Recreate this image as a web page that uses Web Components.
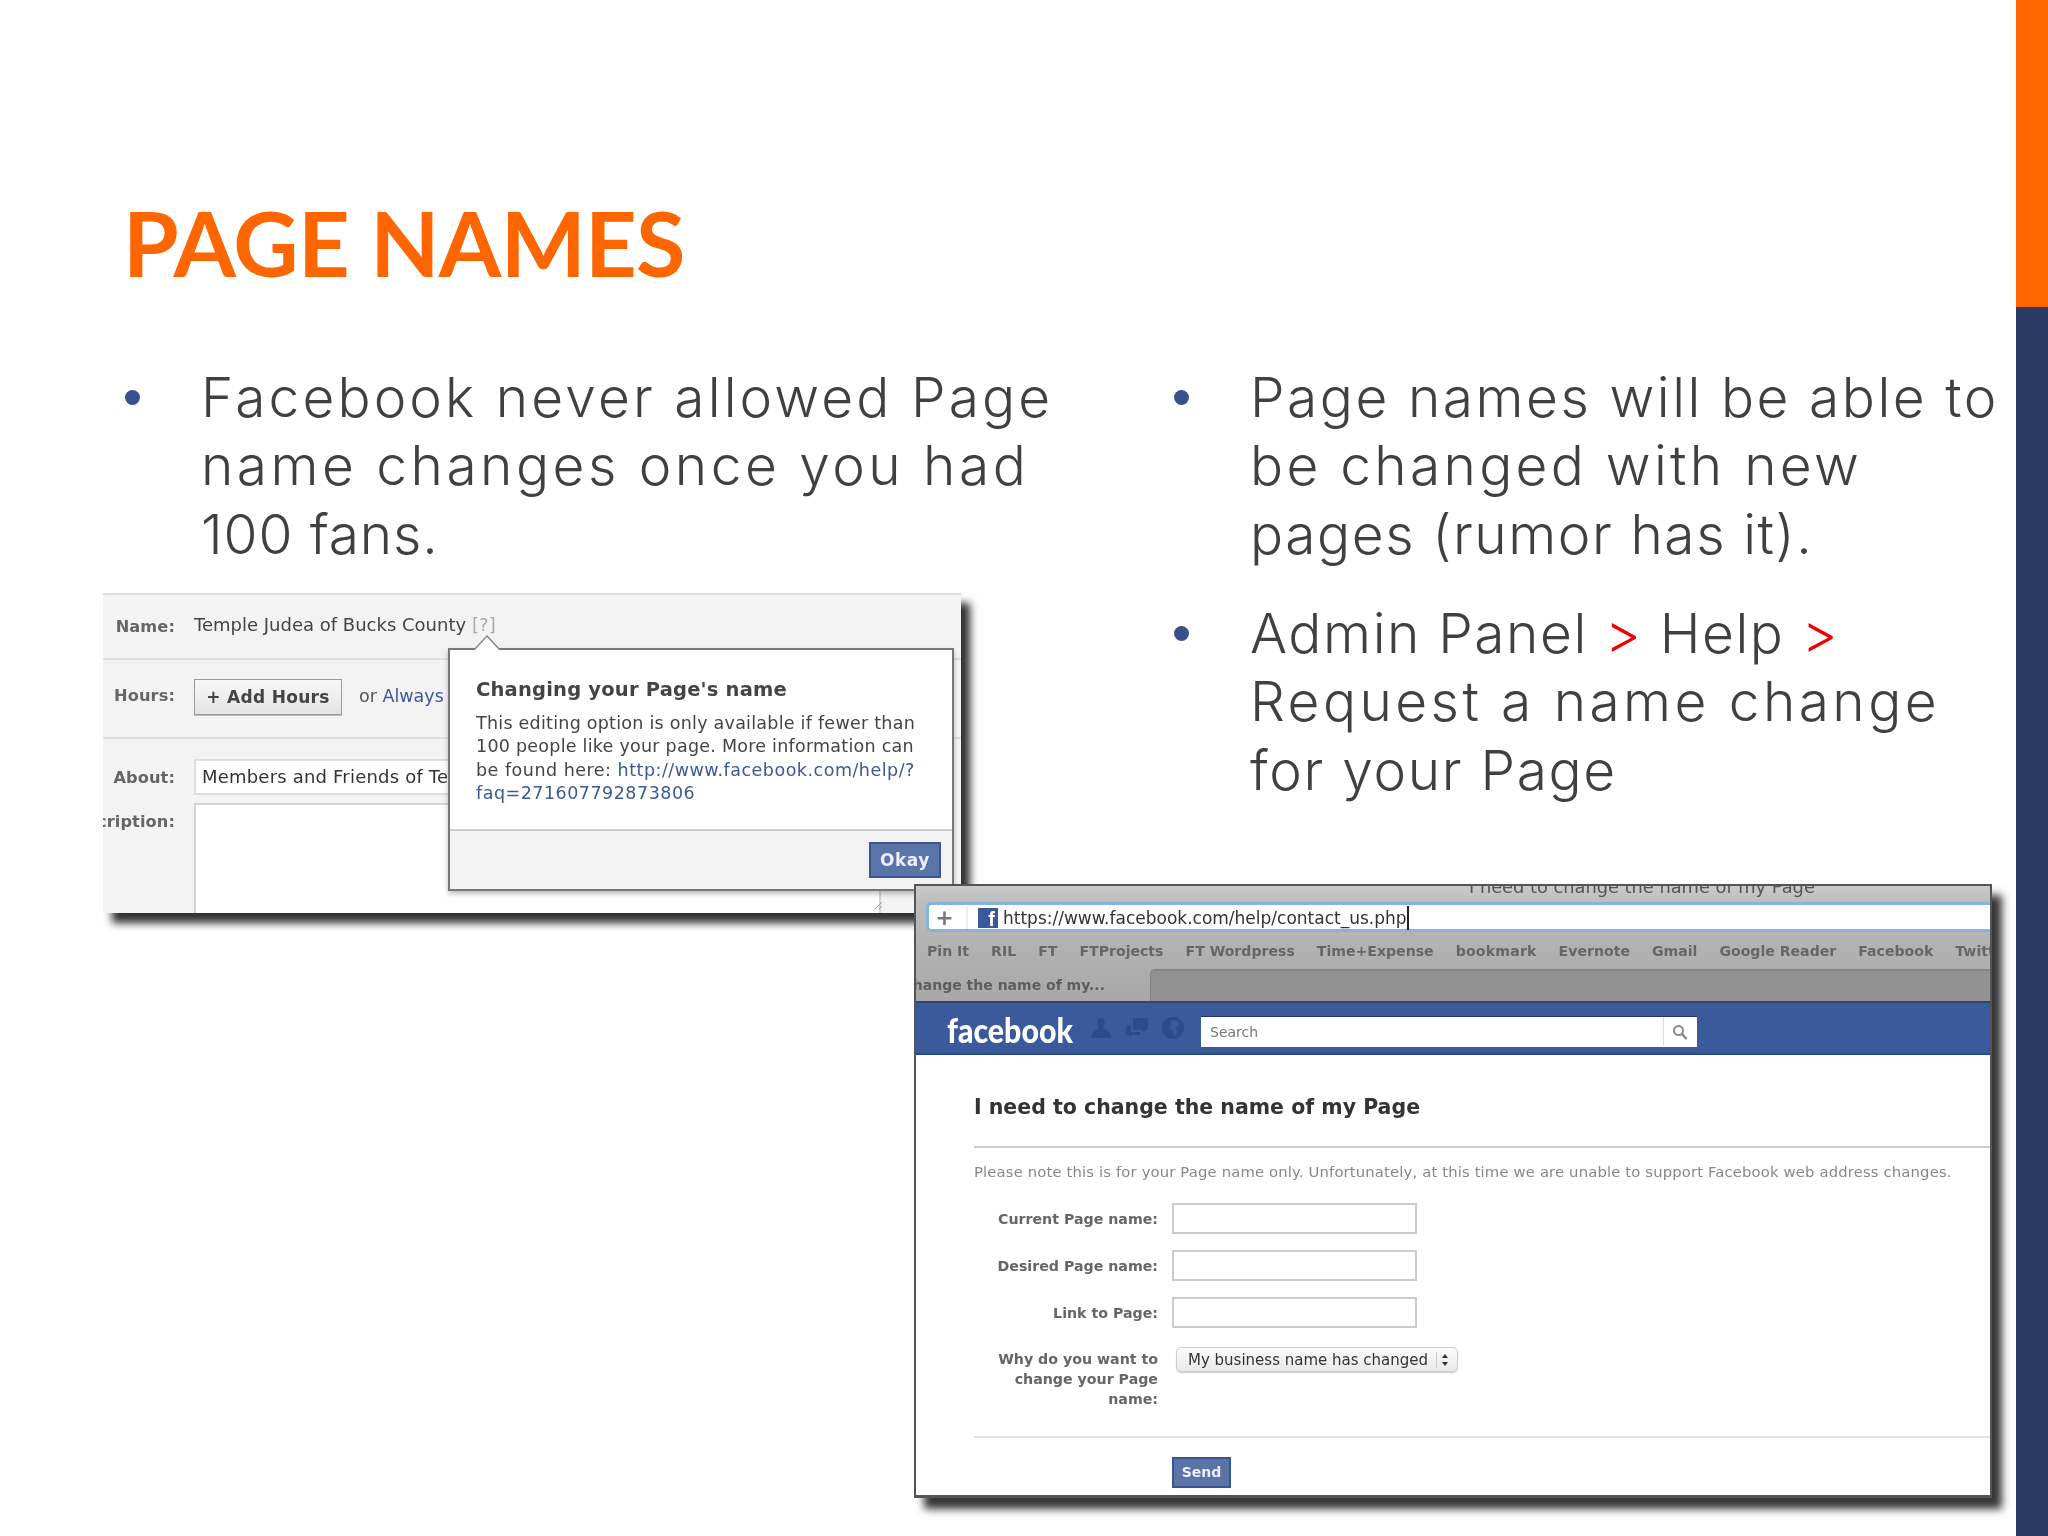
<!DOCTYPE html>
<html><head><meta charset="utf-8"><title>Page names</title>
<style>html,body{margin:0;background:#fff}
bullet-item b{font-weight:300;color:#f00000}</style></head>
<body>
<slide-page>
  <slide-title slot="title">PAGE NAMES</slide-title>
  <bullet-item slot="left"><span style="letter-spacing:3.12px">Facebook never allowed Page</span><br><span style="letter-spacing:3.48px">name changes once you had</span><br><span style="letter-spacing:.9px">100 fans.</span></bullet-item>
  <bullet-item slot="right"><span style="letter-spacing:2.54px">Page names will be able to</span><br><span style="letter-spacing:3.28px">be changed with new</span><br><span style="letter-spacing:1.58px">pages (rumor has it).</span></bullet-item>
  <bullet-item slot="right" class="next"><span style="letter-spacing:1.6px">Admin Panel <b>&gt;</b> Help <b>&gt;</b></span><br><span style="letter-spacing:3.43px">Request a name change</span><br><span style="letter-spacing:1.69px">for your Page</span></bullet-item>
  <edit-shot slot="shots"></edit-shot>
  <help-shot slot="shots"></help-shot>
</slide-page>
<script>
function def(name, html){customElements.define(name,class extends HTMLElement{constructor(){super();this.attachShadow({mode:'open'}).innerHTML=html;}});}
const UI="'DejaVu Sans',sans-serif";
def('slide-page',`<style>
:host{display:grid;grid-template-columns:2016px 32px;width:2048px;height:1536px;position:relative;overflow:hidden;background:#fff;font-family:Inter,sans-serif}
.main{padding:0 0 0 125px;display:flex;flex-direction:column}
.cols{display:grid;grid-template-columns:1049px 1fr;margin-top:71px}
.side{display:flex;flex-direction:column}.o{height:307px;background:#ff6600}.n{flex:1;background:#2a3a63}
</style><div class="main"><slot name="title"></slot><div class="cols"><div><slot name="left"></slot></div><div><slot name="right"></slot></div></div></div>
<div class="side"><div class="o"></div><div class="n"></div></div><slot name="shots"></slot>`);
def('slide-title',`<style>:host{display:block;padding:192px 0 0;margin-left:-2px;font:700 90px/100px Lato,sans-serif;letter-spacing:-.7px;color:#ff6600;white-space:nowrap}</style><span><slot></slot></span>`);
def('bullet-item',`<style>:host{display:grid;grid-template-columns:76px 1fr;font:300 55px/68.4px Inter,sans-serif;color:#404040;white-space:nowrap}
:host(.next){margin-top:30.6px}
i{display:block;width:15px;height:15px;border-radius:50%;background:#3a4f8e;margin:27px 0 0 0}</style><i></i><div><slot></slot></div>`);
def('edit-shot',`<style>
:host{position:absolute;left:103px;top:593px;width:858px;height:320px;box-shadow:9px 10px 8px rgba(20,20,20,.88);font-family:${UI};display:block}
.w{width:100%;height:100%;background:#f3f3f3;overflow:hidden;position:relative;filter:blur(.6px);border-top:2px solid #dcdcdc;box-sizing:border-box}
.r{display:grid;grid-template-columns:72px 1fr;column-gap:19px;border-bottom:2px solid #dedede;box-sizing:border-box;align-items:center}
.l{display:flex;justify-content:flex-end;font-weight:700;font-size:16.2px;letter-spacing:.1px;color:#666;white-space:nowrap}
.r1{height:65px}.r2{height:79px}
.v{font-size:18px;color:#444;white-space:nowrap;margin-top:-4px}.q{color:#aaa;margin-left:6px}
.btn{display:inline-block;box-sizing:border-box;width:148px;height:36px;line-height:34px;text-align:center;border:1px solid #999;background:linear-gradient(#f8f8f8,#e4e4e4);font-weight:700;font-size:17px;letter-spacing:.3px;color:#444;box-shadow:0 1px 0 #bbb;white-space:nowrap;margin-top:-3px}
.h{display:flex;align-items:center;gap:17px}.or{font-size:17.5px;color:#555;margin-top:-5px;white-space:nowrap}.or a{color:#3b5998}
.r3{border:0;padding-top:20px;align-items:start}.r4{border:0;padding-top:8px;align-items:start}
.in{box-sizing:border-box;width:687px;height:36px;line-height:32px;border:2px solid #ddd;background:#fff;font-size:18px;letter-spacing:.2px;color:#333;padding-left:6px;white-space:nowrap;overflow:hidden}
.ta{box-sizing:border-box;width:687px;height:200px;border:2px solid #d4d4d4;background:#fff}
.mt{margin-top:9px}.up{margin-top:-6px}
.grip{position:absolute;left:770px;top:304px}
</style><div class="w">
<div class="r r1"><div class="l"><span>Name:</span></div><div class="v"><span>Temple Judea of Bucks County</span><span class="q">[?]</span></div></div>
<div class="r r2"><div class="l up"><span>Hours:</span></div><div class="h"><span class="btn"><span>+ Add Hours</span></span><span class="or"><span>or <a>Always</a></span></span></div></div>
<div class="r r3"><div class="l mt"><span>About:</span></div><div class="in"><span>Members and Friends of Temple</span></div></div>
<div class="r r4"><div class="l mt"><span>Description:</span></div><div class="ta"></div></div>
<svg class="grip" width="10" height="10" viewBox="0 0 10 10"><path d="M2 10 9 3M6 10 9 7" stroke="#999" stroke-width="1"/></svg>
<fb-popup></fb-popup></div>`);
def('fb-popup',`<style>
:host{position:absolute;left:345px;top:53px;width:506px;height:243px;box-sizing:border-box;border:2px solid #777;background:#fff;display:flex;flex-direction:column;box-shadow:0 3px 5px rgba(0,0,0,.25)}
svg{position:absolute;left:24px;top:-15px}
.b{height:181px;box-sizing:border-box;padding:27px 0 0 26px;border-bottom:2px solid #ccc;white-space:nowrap}
h3{margin:0 0 9px;font-size:19.5px;letter-spacing:.2px;line-height:26px;color:#444}
p{margin:0;font-size:17.5px;line-height:23.4px;color:#444;letter-spacing:.25px}a{color:#3b5998}
.l3{letter-spacing:.5px}
.f{flex:1;background:#f3f3f3;display:flex;justify-content:flex-end;align-items:center;padding-right:11px}
.ok{box-sizing:border-box;width:72px;height:36px;line-height:33px;text-align:center;background:#5b74a8;border:2px solid #3a5590;color:#eef;font-weight:700;font-size:17px;letter-spacing:.5px}
</style><svg width="26" height="16" viewBox="0 0 26 16"><path d="M0 15 13 1 26 15" fill="#fff" stroke="#888" stroke-width="1.5"/></svg>
<div class="b"><h3><span>Changing your Page's name</span></h3><p><span>This editing option is only available if fewer than</span><br><span>100 people like your page. More information can</span><br><span class="l3">be found here: <a>http://www.facebook.com/help/?</a></span><br><a class="l3">faq=271607792873806</a></p></div>
<div class="f"><span class="ok"><span>Okay</span></span></div>`);
def('help-shot',`<style>
:host{position:absolute;left:914px;top:884px;width:1078px;height:614px;box-sizing:border-box;border:2px solid #555;border-bottom-width:3px;background:#fff;box-shadow:10px 11px 8px rgba(20,20,20,.85);display:block;font-family:${UI}}
.w{height:100%;overflow:hidden;display:flex;flex-direction:column;filter:blur(.6px)}
</style><div class="w"><browser-chrome></browser-chrome><fb-bar></fb-bar><help-form></help-form></div>`);
def('browser-chrome',`<style>
:host{display:block;height:115px;background:linear-gradient(#cacaca 0,#bcbcbc 18px,#b2b2b2 60px,#a8a8a8 100%);overflow:hidden;white-space:nowrap}
.t{height:16px;overflow:hidden;position:relative}.t span{position:absolute;left:553px;top:-10px;font-size:17.8px;color:#555}
.u{margin-left:10px;height:30px;background:#fff;box-sizing:border-box;border:3px solid #86b4db;border-right:0;border-radius:5px 0 0 5px;display:flex;align-items:center;font-size:17px;color:#333;padding-top:1px}
.p{width:39px;text-align:center;color:#777;font-size:22px;font-weight:700;line-height:22px;border-right:2px solid #eee;margin-right:10px;padding-right:6px;box-sizing:border-box;height:22px}
.fav{width:20px;height:20px;background:#3b5998;color:#fff;font:700 20px/22px 'Liberation Sans';text-align:right;padding-right:3px;box-sizing:border-box;margin-right:5px;overflow:hidden}
.c{display:inline-block;width:2px;height:24px;background:#222}
.b{height:37px;display:flex;align-items:center;gap:22px;padding-left:11px;font-weight:700;font-size:14.1px;color:#666;overflow:hidden}
.tabs{display:flex;height:32px}.a{width:234px;display:flex;justify-content:flex-end;padding-right:45px;box-sizing:border-box;overflow:hidden;line-height:32px;font-weight:700;font-size:14px;color:#5d5d5d}
.d{flex:1;background:#929292;border-radius:5px 0 0 0;border-left:1px solid #808080;border-top:2px solid #858585}
</style><div class="t"><span>I need to change the name of my Page</span></div>
<div class="u"><span class="p">+</span><span class="fav">f</span><span>https://www.facebook.com/help/contact_us.php</span><i class="c"></i></div>
<div class="b"><span>Pin It</span><span>RIL</span><span>FT</span><span>FTProjects</span><span>FT Wordpress</span><span>Time+Expense</span><span style="letter-spacing:.2px">bookmark</span><span>Evernote</span><span>Gmail</span><span>Google Reader</span><span>Facebook</span><span>Twitter</span></div>
<div class="tabs"><div class="a"><span>Change the name of my...</span></div><div class="d"></div></div>`);
def('fb-bar',`<style>
:host{display:flex;align-items:center;height:54px;box-sizing:border-box;background:#3b5a9b;border-top:2px solid #2f4470;border-bottom:2px solid #2a4a8a;padding:6px 0 0 31px;overflow:hidden}
.logo{font:900 35px/40px Lato,sans-serif;color:#fff;width:126px;white-space:nowrap;margin-top:-4px}
.logo span{display:inline-block;transform:scaleX(.866);transform-origin:0 50%}
.ic{display:flex;gap:14px;margin-left:17px;margin-right:17px;width:94px;margin-top:-6px}
.s{width:496px;height:31px;background:#fff;box-sizing:border-box;border-top:1px solid #24365e;display:flex;align-items:center;font-size:14px;color:#777;padding-left:9px}
.s span{flex:1}.g{width:32px;height:29px;border-left:1px solid #ddd;display:flex;align-items:center;justify-content:center;margin-right:1px}
</style><span class="logo"><span>facebook</span></span>
<span class="ic"><svg width="22" height="22" viewBox="0 0 22 22"><path d="M11 1c3 0 4 3 3.500 6-.3 2-1 3-1.500 4 1 2 6 3 7 6l1 4H1l1-4c1-3 6-4 7-6-.5-1-1.200-2-1.500-4C7 4 8 1 11 1z" fill="#2c4a8c"/></svg>
<svg width="22" height="22" viewBox="0 0 22 22"><path d="M7 1h15v12h-3v3l-3-3H7z" fill="#2c4a8c"/><path d="M0 8h5v7h9v3H6l-3 3v-3H0z" fill="#2c4a8c"/></svg>
<svg width="22" height="22" viewBox="0 0 22 22"><circle cx="11" cy="11" r="11" fill="#2c4a8c"/><path d="M9 3l7 1 1 4-3 3 1 4-3 5-1-6-4-3 2-3z" fill="#3b5a9b"/></svg></span>
<div class="s"><span>Search</span><div class="g"><svg width="16" height="16" viewBox="0 0 16 16"><circle cx="6.500" cy="6.500" r="4.500" fill="none" stroke="#8a8a8a" stroke-width="2"/><path d="M10 10l4.500 5" stroke="#8a8a8a" stroke-width="2.500"/></svg></div></div>`);
def('help-form',`<style>
:host{display:block;flex:1;padding-left:58px;background:#fff;white-space:nowrap}
h2{margin:0;padding-top:38px;height:93px;box-sizing:border-box;border-bottom:2px solid #ccc;font-size:20.5px;line-height:28px;color:#333}
.n{font-size:14.8px;letter-spacing:.15px;line-height:20px;color:#888;margin:14px 0 21px}
.g{display:grid;grid-template-columns:184px 245px;column-gap:14px;row-gap:16px;align-items:center}
.l{font-weight:700;font-size:14.2px;color:#666;text-align:right;line-height:20px}
.i{height:31px;box-sizing:border-box;border:2px solid #ccc;background:#fff}
.top{align-self:start;margin-top:5px}
.sel{box-sizing:border-box;margin:3px 0 0 4px;width:282px;height:25px;border:1px solid #ccc;border-radius:5px;background:linear-gradient(#fbfbfb,#e9e9e9);display:flex;align-items:center;font-size:15px;color:#333;padding-left:11px;align-self:start;box-shadow:0 1px 1px #ccc}
.ar{margin-left:8px;border-left:1px solid #ccc;padding-left:4px;display:flex;height:16px;align-items:center}
hr{border:0;border-top:2px solid #e2e2e2;margin:27px 0 19px}
.send{display:block;margin-left:198px;width:59px;height:31px;box-sizing:border-box;background:#5b74a8;border:2px solid #3a5590;color:#eef;font-weight:700;font-size:14px;line-height:27px;text-align:center}
</style><h2><span>I need to change the name of my Page</span></h2>
<div class="n"><span>Please note this is for your Page name only. Unfortunately, at this time we are unable to support Facebook web address changes.</span></div>
<div class="g"><div class="l"><span>Current Page name:</span></div><div class="i"></div><div class="l"><span>Desired Page name:</span></div><div class="i"></div><div class="l"><span>Link to Page:</span></div><div class="i"></div>
<div class="l top"><span>Why do you want to</span><br><span>change your Page</span><br><span>name:</span></div><div class="sel"><span>My business name has changed</span><span class="ar"><svg width="8" height="14" viewBox="0 0 8 14"><path d="M4 1l3 4H1zM4 13L1 9h6z" fill="#333"/></svg></span></div></div>
<hr><span class="send"><span>Send</span></span>`);
</script>
</body></html>
